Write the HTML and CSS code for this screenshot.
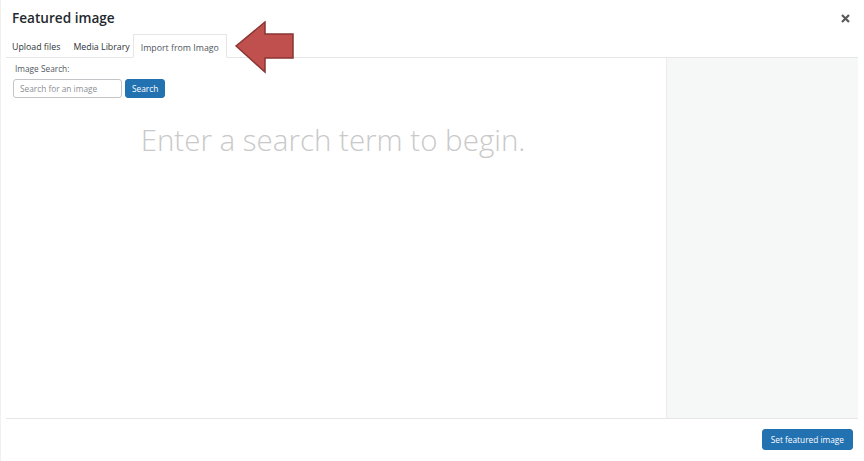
FILE: index.html
```html
<!DOCTYPE html>
<html>
<head>
<meta charset="utf-8">
<link rel="stylesheet" href="styles.css">
</head>
<body>
<div class="modal">
  <header class="head">
    <h1 class="title">Featured image</h1>
    <button class="close" aria-label="Close">
      <svg width="9" height="9" viewBox="0 0 9 9"><path d="M1 1L8 8M8 1L1 8" stroke="#5a5a5a" stroke-width="2.2"/></svg>
    </button>
  </header>
  <nav class="tabs">
    <span class="tab tab-first">Upload files</span>
    <span class="tab tab-second">Media Library</span>
    <span class="tab active">Import from Imago</span>
  </nav>
  <div class="body">
    <main class="main">
      <label class="label">Image Search:</label>
      <div class="search-row">
        <input class="input" type="text" placeholder="Search for an image">
        <button class="btn">Search</button>
      </div>
      <p class="empty">Enter a search term to begin.</p>
    </main>
    <aside class="sidebar"></aside>
  </div>
  <footer class="foot">
    <button class="btn btn-lg">Set featured image</button>
  </footer>
  <svg class="arrow" width="62" height="54" viewBox="0 0 62 54">
    <polygon points="1,25 30,1 30,13 58,13 58,37 30,37 30,51" fill="#c0504d" stroke="#8a3532" stroke-width="1.5" stroke-linejoin="miter"/>
  </svg>
</div>
</body>
</html>
```
FILE: styles.css
```css
* { box-sizing: border-box; }
html, body { margin: 0; padding: 0; background: #fff; }
body { font-family: "Open Sans", "Noto Sans", sans-serif; color: #1d2327; }
.modal {
  position: relative;
  width: 864px;
  height: 461px;
  display: flex;
  flex-direction: column;
  padding: 0 6px 0 5px;
  border-left: 1px solid #f0f0f0;
}
.head {
  height: 34px;
  display: flex;
  align-items: flex-start;
  justify-content: space-between;
  padding: 8px 0 0 6px;
}
.title {
  margin: 0;
  font-size: 13.6px;
  font-weight: 600;
  line-height: 20px;
  color: #23282d;
}
.close {
  border: 0;
  background: none;
  padding: 0;
  margin: 6px 8px 0 0;
  width: 9px;
  height: 9px;
  display: block;
}
.close svg { display: block; }
.tabs {
  height: 24px;
  display: flex;
  align-items: flex-end;
  border-bottom: 1px solid #e6e6e6;
  padding-left: 6px;
}
.tab {
  font-size: 8.8px;
  line-height: 20px;
  height: 23px;
  padding-top: 3px;
  color: #2c3338;
  white-space: nowrap;
}
.tab-first { margin-right: 13px; }
.tab-second { margin-right: 3px; }
.tab.active {
  border: 1px solid #e6e6e6;
  border-bottom: 1px solid #fff;
  margin-bottom: -1px;
  height: 24px;
  padding: 3px 7px 0;
  background: #fff;
  color: #50575e;
}
.body {
  flex: 1;
  display: flex;
  min-height: 0;
}
.main {
  flex: 1;
  padding: 5px 0 0 9px;
}
.label {
  display: block;
  font-size: 8.3px;
  line-height: 12px;
  color: #50575e;
}
.search-row {
  display: flex;
  gap: 3px;
  margin-top: 4px;
  margin-left: -2px;
}
.input {
  width: 109px;
  height: 19px;
  border: 1px solid #c3c4c7;
  border-radius: 3px;
  padding: 0 6px;
  font-family: inherit;
  font-size: 8.3px;
  color: #50575e;
}
.input::placeholder { color: #8c8f94; }
.btn {
  height: 19px;
  padding: 0 6px;
  background: #2271b1;
  border: 1px solid #2271b1;
  border-radius: 3px;
  color: #fff;
  font-family: inherit;
  font-size: 8.3px;
  line-height: 17px;
}
.empty {
  margin: 22px 0 0 -15px;
  text-align: center;
  font-size: 29.5px;
  font-weight: 300;
  line-height: 40px;
  color: #c9c9c9;
}
.sidebar {
  width: 192px;
  background: #f6f7f7;
  border-left: 1px solid #ececec;
}
.foot {
  height: 43px;
  border-top: 1px solid #e6e6e6;
  display: flex;
  justify-content: flex-end;
  align-items: flex-start;
  padding: 10px 0 0 0;
}
.btn-lg {
  height: 21px;
  padding: 0 8px;
  margin-right: 5px;
}
.arrow {
  position: absolute;
  left: 234px;
  top: 21px;
}
```
